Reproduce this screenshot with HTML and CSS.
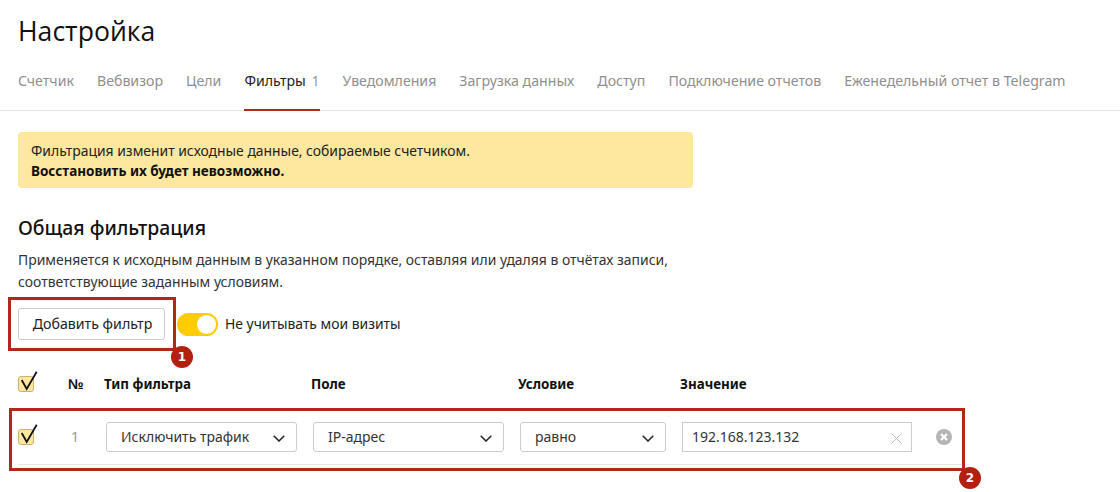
FILE: index.html
```html
<!DOCTYPE html>
<html lang="ru">
<head>
<meta charset="utf-8">
<title>Настройка</title>
<link rel="stylesheet" href="styles.css">
</head>
<body>
<h1 class="title">Настройка</h1>
<nav class="tabs">
  <a class="tab">Счетчик</a>
  <a class="tab">Вебвизор</a>
  <a class="tab">Цели</a>
  <a class="tab active">Фильтры <span class="count">1</span></a>
  <a class="tab">Уведомления</a>
  <a class="tab">Загрузка данных</a>
  <a class="tab">Доступ</a>
  <a class="tab">Подключение отчетов</a>
  <a class="tab">Еженедельный отчет в Telegram</a>
</nav>
<main class="content">
  <div class="notice">
    <div>Фильтрация изменит исходные данные, собираемые счетчиком.</div>
    <div class="strong">Восстановить их будет невозможно.</div>
  </div>
  <h2 class="heading">Общая фильтрация</h2>
  <p class="desc">Применяется к исходным данным в указанном порядке, оставляя или удаляя в отчётах записи, соответствующие заданным условиям.</p>
  <div class="actions">
    <button class="btn">Добавить фильтр</button>
    <span class="toggle"><span class="knob"></span></span>
    <span class="toggle-label">Не учитывать мои визиты</span>
  </div>
  <div class="grid head">
    <span class="check"><svg viewBox="0 0 20 24" width="20" height="24"><path d="M2.700 10l5 9 10-17.300" fill="none" stroke="#111" stroke-width="1.800"/></svg></span>
    <span class="num">№</span>
    <span>Тип фильтра</span>
    <span>Поле</span>
    <span>Условие</span>
    <span>Значение</span>
  </div>
  <div class="grid row">
    <span class="check"><svg viewBox="0 0 20 24" width="20" height="24"><path d="M2.700 10l5 9 10-17.300" fill="none" stroke="#111" stroke-width="1.800"/></svg></span>
    <span class="idx">1</span>
    <span class="select">Исключить трафик<svg class="chev" viewBox="0 0 12 7" width="12" height="7"><path d="M.7.7L6 6 11.300.7" fill="none" stroke="#222" stroke-width="1.500"/></svg></span>
    <span class="select">IP-адрес<svg class="chev" viewBox="0 0 12 7" width="12" height="7"><path d="M.7.7L6 6 11.300.7" fill="none" stroke="#222" stroke-width="1.500"/></svg></span>
    <span class="select">равно<svg class="chev" viewBox="0 0 12 7" width="12" height="7"><path d="M.7.7L6 6 11.300.7" fill="none" stroke="#222" stroke-width="1.500"/></svg></span>
    <span class="input">192.168.123.132<svg class="clear" viewBox="0 0 11 11" width="11" height="11"><path d="M.5.5l10 10M10.500.5l-10 10" fill="none" stroke="#bbb" stroke-width="1"/></svg></span>
    <svg class="remove" viewBox="0 0 16 16" width="16" height="16"><circle cx="8" cy="8" r="8" fill="#b5b5b5"/><path d="M5 5l6 6M11 5l-6 6" fill="none" stroke="#fff" stroke-width="2.200"/></svg>
  </div>
</main>
<div class="mark mark-one"></div>
<div class="mark mark-two"></div>
<span class="badge badge-one">1</span>
<span class="badge badge-two">2</span>
</body>
</html>
```

FILE: styles.css
```css
* { box-sizing: border-box; }
html, body { margin: 0; padding: 0; height: 492px; overflow: hidden; background: #fff; }
body { position: relative; font-family: "Noto Sans", sans-serif; color: #222; font-size: 14px; }
.title { margin: 0; padding: 12px 0 0 18px; height: 68px; font-family: "Open Sans", sans-serif; font-size: 26.600px; line-height: 38px; font-weight: 400; color: #111; }
.tabs { display: flex; gap: 23px; height: 43px; padding-left: 18px; border-bottom: 1px solid #e6e6e6; }
.tab { display: block; height: 42px; padding-top: 2px; font-size: 14.150px; line-height: 22px; color: #8f8f8f; white-space: nowrap; }
.tab.active { color: #222; border-bottom: 2px solid #b3261a; height: 43px; }
.count { margin-left: 2px; color: #999; }
.content { padding: 21px 18px 0; }
.notice { width: 675px; height: 56px; padding: 9px 13px; background: #fee79f; border-radius: 4px; font-size: 13.900px; line-height: 20px; }
.strong { font-size: 13.500px; font-weight: 700; color: #111; }
.heading { margin: 26px 0 0; font-size: 19.400px; line-height: 28px; font-weight: 500; color: #111; }
.desc { margin: 7px 0 0; width: 670px; font-size: 13.950px; line-height: 22px; color: #333; }
.actions { display: flex; align-items: center; margin-top: 15px; height: 32px; }
.btn { width: 147px; height: 32px; padding: 0 0 2px 2px; background: #fff; border: 1px solid #ccc; border-radius: 3px; font: 14.200px "Noto Sans", sans-serif; color: #222; }
.toggle { display: flex; justify-content: flex-end; align-items: center; width: 41px; height: 23px; margin-left: 12px; padding-right: 2px; border-radius: 12px; background: #fc0; }
.knob { width: 19px; height: 19px; border-radius: 50%; background: #fff; }
.toggle-label { margin: 0 0 2px 7px; font-size: 13.900px; color: #222; }
.grid { display: grid; }
.head { grid-template-columns: 50px 36px 207px 207px 162px 230px; margin-top: 30px; height: 28px; align-items: center; font-weight: 700; font-size: 13.400px; color: #111; }
.row { grid-template-columns: 50px 38px 207px 207px 162px 230px 32px; align-items: start; height: 67px; padding-top: 24px; border-bottom: 1px solid #e6e6e6; width: 945px; }
.check { position: relative; display: block; width: 16px; height: 16px; background: #fee79f; border: 1px solid #c9b26a; border-radius: 3px; }
.row .check { margin-top: 7px; }
.check svg { position: absolute; left: 0; top: -7px; }
.num { font-family: "Liberation Sans", sans-serif; font-size: 14px; }
.idx { margin: 5px 0 0 3px; color: #999; font-size: 14px; }
.select { position: relative; display: flex; align-items: center; width: 191px; height: 30px; padding: 0 0 1px 14px; border: 1px solid #ccc; border-radius: 3px; font-size: 14px; color: #333; background: #fff; white-space: nowrap; }
.select:nth-child(5) { width: 146px; }
.chev { position: absolute; right: 11px; top: 12px; }
.input { position: relative; display: flex; align-items: center; height: 30px; padding: 0 0 1px 9px; border: 1px solid #ccc; font-size: 14px; color: #333; }
.clear { position: absolute; right: 9px; top: 10px; }
.remove { margin: 7px 0 0 24px; }
.mark { position: absolute; border: 3px solid #b3261a; }
.mark-one { left: 8px; top: 297px; width: 168px; height: 54px; }
.mark-two { left: 9px; top: 408px; width: 956px; height: 63px; }
.badge { position: absolute; width: 22px; height: 22px; border-radius: 50%; background: #b3200f; color: #fff; font: 700 12px/22px "DejaVu Sans", sans-serif; text-align: center; }
.badge-one { left: 171px; top: 346px; }
.badge-two { left: 959px; top: 467px; }
```
